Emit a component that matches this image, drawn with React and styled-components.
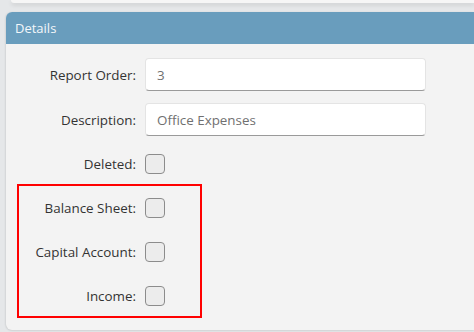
import React from 'react';
import styled, { createGlobalStyle } from 'styled-components';

const GlobalStyle = createGlobalStyle`
  html, body {
    margin: 0;
    padding: 0;
    background: #e5e7e9;
    font-family: "Open Sans", "Noto Sans", sans-serif;
    height: 100%;
    overflow: hidden;
  }
`;

const Page = styled.div`
  width: 474px;
  height: 332px;
  display: flex;
  flex-direction: column;
`;

const TopCard = styled.div`
  height: 3px;
  margin-left: 11px;
  background: #f6f6f6;
  border-bottom-left-radius: 4px;
  box-shadow: 0 2px 4px rgba(0, 0, 0, 0.12);
`;

const Panel = styled.section`
  margin: 9px 0 0 6px;
  height: 318px;
  background: #f3f3f3;
  border-radius: 6px 0 0 6px;
  box-shadow: -1px 0 2px rgba(0, 0, 0, 0.06), 0 1px 2px rgba(0, 0, 0, 0.08);
  display: flex;
  flex-direction: column;
  overflow: hidden;
`;

const PanelHeader = styled.h3`
  margin: 0;
  height: 32px;
  line-height: 32px;
  padding-left: 9px;
  background: #699dbd;
  color: #f3f7fa;
  font-size: 13px;
  font-weight: 400;
`;

const Body = styled.div`
  padding-top: 8px;
  display: flex;
  flex-direction: column;
`;

const Row = styled.div`
  display: flex;
  align-items: center;
  height: ${p => p.$tall ? 45 : 44}px;
  gap: 9px;
`;

const Label = styled.label`
  width: 130px;
  text-align: right;
  font-size: 13.4px;
  color: #333;
`;

const Input = styled.div`
  box-sizing: border-box;
  width: 281px;
  height: 33px;
  padding-left: 11px;
  display: flex;
  align-items: center;
  background: #fff;
  border: 1px solid #e4e4e4;
  border-bottom-color: #9a9a9a;
  border-radius: 4px;
  font-size: 13.4px;
  color: #707070;
`;

const Check = styled.span`
  box-sizing: border-box;
  width: 20px;
  height: 20px;
  background: #ececec;
  border: 1px solid #8c8c8c;
  border-radius: 4px;
`;

const Highlight = styled.div`
  position: relative;

  &::after {
    content: '';
    position: absolute;
    top: -2px;
    bottom: 0;
    left: 11px;
    width: 185px;
    box-sizing: border-box;
    border: 2px solid #f00;
    pointer-events: none;
  }
`;

const fields = [
  { label: 'Report Order:', value: '3' },
  { label: 'Description:', value: 'Office Expenses' },
];

const flags = ['Balance Sheet:', 'Capital Account:', 'Income:'];

export default function App() {
  return (
    <Page>
      <GlobalStyle />
      <TopCard />
      <Panel>
        <PanelHeader>Details</PanelHeader>
        <Body>
          {fields.map(f => (
            <Row key={f.label} $tall>
              <Label>{f.label}</Label>
              <Input>{f.value}</Input>
            </Row>
          ))}
          <Row>
            <Label>Deleted:</Label>
            <Check />
          </Row>
          <Highlight>
            {flags.map(f => (
              <Row key={f}>
                <Label>{f}</Label>
                <Check />
              </Row>
            ))}
          </Highlight>
        </Body>
      </Panel>
    </Page>
  );
}
